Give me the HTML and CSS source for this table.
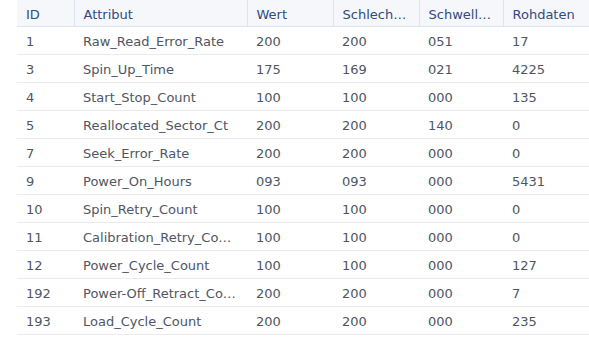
FILE: index.html
```html
<!DOCTYPE html>
<html>
<head>
  <link rel="stylesheet" href="styles.css">
</head>
<body>
  <div class="panel">
    <table class="smart-table">
      <colgroup>
        <col class="col-id">
        <col class="col-attr">
        <col class="col-num">
        <col class="col-num">
        <col class="col-thr">
        <col>
      </colgroup>
      <thead>
        <tr>
          <th>ID</th>
          <th>Attribut</th>
          <th>Wert</th>
          <th>Schlechtester Wert</th>
          <th>Schwellwert</th>
          <th>Rohdaten</th>
        </tr>
      </thead>
      <tbody>
        <tr><td>1</td><td>Raw_Read_Error_Rate</td><td>200</td><td>200</td><td>051</td><td>17</td></tr>
        <tr><td>3</td><td>Spin_Up_Time</td><td>175</td><td>169</td><td>021</td><td>4225</td></tr>
        <tr><td>4</td><td>Start_Stop_Count</td><td>100</td><td>100</td><td>000</td><td>135</td></tr>
        <tr><td>5</td><td>Reallocated_Sector_Ct</td><td>200</td><td>200</td><td>140</td><td>0</td></tr>
        <tr><td>7</td><td>Seek_Error_Rate</td><td>200</td><td>200</td><td>000</td><td>0</td></tr>
        <tr><td>9</td><td>Power_On_Hours</td><td>093</td><td>093</td><td>000</td><td>5431</td></tr>
        <tr><td>10</td><td>Spin_Retry_Count</td><td>100</td><td>100</td><td>000</td><td>0</td></tr>
        <tr><td>11</td><td>Calibration_Retry_Count</td><td>100</td><td>100</td><td>000</td><td>0</td></tr>
        <tr><td>12</td><td>Power_Cycle_Count</td><td>100</td><td>100</td><td>000</td><td>127</td></tr>
        <tr><td>192</td><td>Power-Off_Retract_Count</td><td>200</td><td>200</td><td>000</td><td>7</td></tr>
        <tr><td>193</td><td>Load_Cycle_Count</td><td>200</td><td>200</td><td>000</td><td>235</td></tr>
      </tbody>
    </table>
  </div>
</body>
</html>
```

FILE: styles.css
```css
body {
  margin: 0;
  background: #fff;
  font-family: "DejaVu Sans", Verdana, sans-serif;
  font-size: 13px;
}
.panel {
  padding-left: 17px;
}
.smart-table {
  width: 572px;
  border-collapse: collapse;
  table-layout: fixed;
}
.col-id {
  width: 57px;
}
.col-attr {
  width: 173px;
}
.col-num {
  width: 86px;
}
.col-thr {
  width: 84px;
}
.smart-table th,
.smart-table td {
  padding: 2px 9px 0;
  text-align: left;
  font-weight: normal;
  white-space: nowrap;
  overflow: hidden;
  text-overflow: ellipsis;
}
.smart-table th {
  height: 24px;
  background: #f5f7fa;
  color: #2f4b80;
  border-bottom: 1px solid #dce5ef;
  border-left: 1px solid #dce5ef;
}
.smart-table th:first-child {
  border-left: none;
}
.smart-table td {
  height: 25px;
  color: #505562;
  border-bottom: 1px solid #ebebeb;
}
```
